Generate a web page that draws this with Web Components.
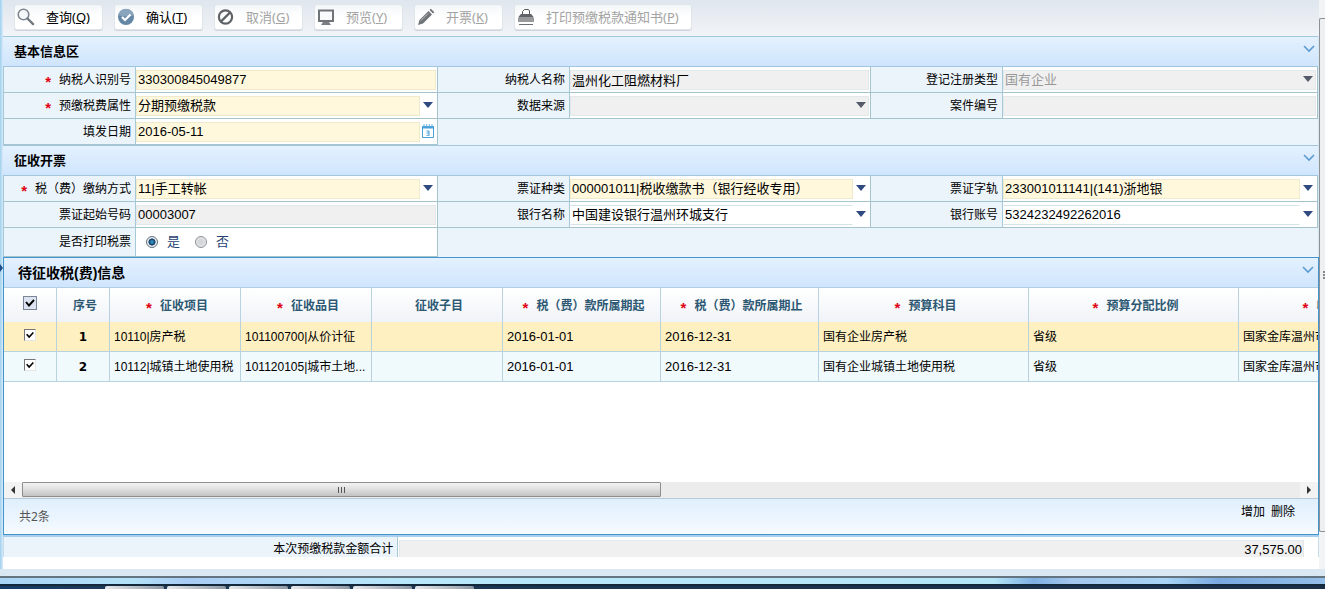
<!DOCTYPE html>
<html lang="zh-CN">
<head>
<meta charset="utf-8">
<title>预缴税款开票</title>
<style>
  body {
    margin: 0;
    background: #fff;
    color: #000;
    font: 12px/18px "Liberation Sans", "Noto Sans CJK SC", sans-serif;
    overflow: hidden;
  }
</style>
</head>
<body>
<page-frame>
  <tool-bar>
    <tool-button icon="search" key="Q">查询</tool-button>
    <tool-button icon="ok" key="T">确认</tool-button>
    <tool-button icon="cancel" key="G" disabled>取消</tool-button>
    <tool-button icon="screen" key="Y" disabled>预览</tool-button>
    <tool-button icon="pencil" key="K" disabled>开票</tool-button>
    <tool-button icon="printer" key="P" disabled>打印预缴税款通知书</tool-button>
  </tool-bar>

  <form-section heading="基本信息区">
    <form-field label="纳税人识别号" required tone="need" value="330300845049877"></form-field>
    <form-field label="纳税人名称" tone="off" value="温州化工阻燃材料厂"></form-field>
    <form-field label="登记注册类型" tone="off" type="select" muted value="国有企业"></form-field>
    <form-field label="预缴税费属性" required tone="need" type="select" value="分期预缴税款"></form-field>
    <form-field label="数据来源" tone="off" type="select" value=""></form-field>
    <form-field label="案件编号" tone="off" value=""></form-field>
    <form-field label="填发日期" tone="need" type="date" value="2016-05-11"></form-field>
  </form-section>

  <form-section heading="征收开票">
    <form-field label="税（费）缴纳方式" required tone="need" type="select" value="11|手工转帐"></form-field>
    <form-field label="票证种类" tone="need" type="select" value="000001011|税收缴款书（银行经收专用）"></form-field>
    <form-field label="票证字轨" tone="need" type="select" value="233001011141|(141)浙地银"></form-field>
    <form-field label="票证起始号码" tone="off" value="00003007"></form-field>
    <form-field label="银行名称" type="select" value="中国建设银行温州环城支行"></form-field>
    <form-field label="银行账号" type="select" value="5324232492262016"></form-field>
    <yes-no-field label="是否打印税票"></yes-no-field>
  </form-section>

  <levy-grid></levy-grid>
  <total-row label="本次预缴税款金额合计" value="37,575.00"></total-row>
</page-frame>
<task-strip></task-strip>

<script>
const define = (name, html, setup) => {
  const tpl = document.createElement('template');
  tpl.innerHTML = html;
  customElements.define(name, class extends HTMLElement {
    constructor() {
      super();
      this.attachShadow({ mode: 'open' });
    }
    connectedCallback() {
      if (this.shadowRoot.childNodes.length) return;
      this.shadowRoot.append(tpl.content.cloneNode(true));
      if (setup) setup(this, this.shadowRoot);
    }
  });
};

const ICONS = {
  search: '<circle cx="6.5" cy="6.5" r="5.3" fill="#f4f8fb" stroke="#7e8790" stroke-width="1.6"/><path d="M10.5 10.5l5.6 5.6" stroke="#707880" stroke-width="2.4" stroke-linecap="round"/>',
  ok: '<circle cx="9" cy="9" r="8" fill="#6587a6"/><path d="M1.5 7a7.6 7.6 0 0 1 15 0q-7 3-15 0z" fill="#89a5bd"/><path d="M5 9l3 3 5.5-5.5" fill="none" stroke="#fff" stroke-width="2.2"/>',
  cancel: '<circle cx="8.5" cy="9" r="6.6" fill="none" stroke="#5e6368" stroke-width="2.2"/><path d="M4 13.500L13 4.500" stroke="#5e6368" stroke-width="2.4"/>',
  screen: '<path d="M2 2.500h14v10.500H2z" fill="#f8fafc" stroke="#6f7478" stroke-width="2"/><path d="M6 14h6l2 3H4z" fill="#7c8084"/>',
  pencil: '<path d="M1 17l1.500-5L11.500 3l3.500 3.500-9 9z" fill="#6f7478"/><path d="M12.500 2l1.400-1.300 3.500 3.500L16 5.500z" fill="#6f7478"/><path d="M4 12.500l7-7" stroke="#b8bcc0"/>',
  printer: '<path d="M5.500 6V3.500L7.500 1.500h4l1 1.500V6" fill="#fff" stroke="#555"/><path d="M4 6h10l3 4v4H1v-4z" fill="#97999b"/><path d="M4 6h10l2.500 3h-15z" fill="#5f6367"/><path d="M2 16.500h14" stroke="#6d7073"/>'
};
const CHEVRON = '<svg width="12" height="8" viewBox="0 0 12 8" aria-hidden="true"><path d="M1 1l5 5 5-5" fill="none" stroke="#5b9bd0" stroke-width="1.6"/></svg>';

define('page-frame', `
  <style>
    :host { display: flex; background: #d9eaf7; }
    .left { flex: 0 0 3px; background: linear-gradient(90deg, #9fd0ef, #d8ebfa); }
    .left svg { display: block; margin-top: 264px; }
    main { flex: 1; min-width: 0; background: #fff; padding-bottom: 12px; }
    .right { flex: 0 0 6px; padding-top: 18px; background: #f2f4f6; box-sizing: border-box; }
    .thumb { height: 514px; border: 1px solid #8c9298; border-right: 0; border-radius: 2px 0 0 2px; background: #eeeff0; box-sizing: border-box; padding: 252px 0 0 3px; }
    .thumb svg { display: block; }
  </style>
  <div class="left"><svg width="3" height="8"><path d="M0 0l3 4-3 4z" fill="#1d4f8c"/></svg></div>
  <main><slot></slot></main>
  <div class="right"><div class="thumb"><svg width="2" height="10"><path d="M0 1h2M0 4h2M0 7h2" stroke="#222"/></svg></div></div>
`);

define('tool-bar', `
  <style>
    :host { display: flex; gap: 11px; padding: 4px 11px 6px; background: linear-gradient(#dfe6ee, #f1f4f7); }
  </style>
  <slot></slot>
`);

define('tool-button', `
  <style>
    :host { display: block; }
    button {
      display: flex; align-items: center; gap: 11px; min-width: 89px; height: 26px; box-sizing: border-box;
      padding: 0 12px 0 2px; border: 1px solid #e0e5ea; border-radius: 3px;
      background: linear-gradient(#f3f6f9, #fff 50%); box-shadow: 0 1px 0 #cfd5da;
      color: #000; font: 13px/18px "Noto Sans", "Noto Sans CJK SC", sans-serif; white-space: nowrap;
    }
    button:disabled { color: #a3a3a3; }
    svg { flex: none; }
  </style>
  <button type="button"><svg width="18" height="18" viewBox="0 0 18 18" aria-hidden="true"></svg><span><slot></slot>(<u></u>)</span></button>
`, (el, root) => {
  root.querySelector('svg').innerHTML = ICONS[el.getAttribute('icon')];
  root.querySelector('u').textContent = el.getAttribute('key');
  root.querySelector('button').disabled = el.hasAttribute('disabled');
});

define('form-section', `
  <style>
    :host { display: block; border-right: 1px solid #d6e6f3; }
    header {
      display: flex; justify-content: space-between; align-items: center; height: 29px; padding: 0 3px 0 11px;
      border: 1px solid #a3c6e0; border-width: 1px 0; background: linear-gradient(#e4f1fe, #cfe5fd);
    }
    h2 { margin: 0; font: bold 13px/20px "Liberation Sans", "Noto Sans CJK SC", sans-serif; }
    button { display: flex; padding: 0; border: 0; background: none; margin-bottom: 6px; }
    .fields { display: grid; grid-template-columns: 434fr 433fr 447fr; background: #ecf4fb; border-left: 1px solid #a6c9d8; }
  </style>
  <header><h2></h2><button type="button" aria-label="收起">${CHEVRON}</button></header>
  <div class="fields"><slot></slot></div>
`, (el, root) => { root.querySelector('h2').textContent = el.getAttribute('heading'); });

const FIELD_CSS = `
  :host { display: grid; grid-template-columns: 132px 1fr; border: 1px solid #a6c4cc; border-width: 0 1px 1px 0; }
  .label { display: flex; justify-content: flex-end; align-items: center; gap: 8px; padding-right: 4px; border-right: 1px solid #a6c9d8; background: #ecf4fb; white-space: nowrap; }
  .req { color: #e00010; font: bold 15px/12px "Liberation Sans", sans-serif; padding-top: 4px; }
`;

define('form-field', `
  <style>
    ${FIELD_CSS}
    .cell { display: flex; align-items: center; position: relative; min-width: 0; height: 25px; padding-right: 1px; background: #fff; }
    input, select {
      appearance: none; width: 100%; min-width: 0; height: 20px; box-sizing: border-box; margin: 0; padding: 0 0 0 1px;
      border: 1px solid #d5e3e8; border-left-color: transparent; border-radius: 0; background: #fff; color: #000; opacity: 1;
      font: 13px/18px "Liberation Sans", "Noto Sans CJK SC", sans-serif;
    }
    .open select, .open input { margin-right: 16px; border-right-color: transparent; }
    .need input, .need select { background: #fff8dc; border-color: #eeeacb; }
    .off input, .off select { background: #f0f0f0; border-color: #e3e9ea; }
    .muted select { color: #999; }
    .arrow { position: absolute; right: 3px; top: 9px; pointer-events: none; }
    .cal { position: absolute; right: 3px; top: 5px; padding: 0; border: 0; background: none; display: flex; }
  </style>
  <label class="label" for="control"><span class="text"></span></label>
  <div class="cell"></div>
`, (el, root) => {
  const type = el.getAttribute('type') || 'text';
  const tone = el.getAttribute('tone') || 'plain';
  const value = el.getAttribute('value');
  const cell = root.querySelector('.cell');
  root.querySelector('.text').textContent = el.getAttribute('label');
  if (el.hasAttribute('required')) {
    root.querySelector('.label').insertAdjacentHTML('afterbegin', '<span class="req">*</span>');
  }
  cell.classList.add(tone);
  if (el.hasAttribute('muted')) cell.classList.add('muted');
  if (type === 'select') {
    if (tone !== 'off') cell.classList.add('open');
    const select = document.createElement('select');
    select.id = 'control';
    select.add(new Option(value, value));
    select.disabled = tone === 'off';
    cell.append(select);
    cell.insertAdjacentHTML('beforeend', `<svg class="arrow" width="11" height="6" aria-hidden="true"><path d="M0 0h10l-5 6z" fill="${tone === 'off' ? '#555b68' : '#2f4a80'}"/></svg>`);
  } else {
    const input = document.createElement('input');
    input.id = 'control';
    input.type = 'text';
    input.value = value;
    input.readOnly = tone === 'off';
    cell.append(input);
    if (type === 'date') {
      cell.classList.add('open');
      cell.insertAdjacentHTML('beforeend', '<button class="cal" type="button" aria-label="选择日期"><svg width="12" height="14" viewBox="0 0 12 14"><path d="M.5 2.500h11v11H.5z" fill="#fff" stroke="#4aa0d8"/><path d="M0 2h12v2.500H0z" fill="#4aa0d8"/><path d="M2 0v3M4.700 0v3M7.300 0v3M10 0v3" stroke="#6db5e2"/><path d="M4.500 7h2.500v4M4.500 9H7M4.500 11.300H7.500" fill="none" stroke="#4aa0d8"/></svg></button>');
    }
  }
});

define('yes-no-field', `
  <style>
    ${FIELD_CSS}
    fieldset { display: flex; align-items: center; gap: 15px; height: 28px; margin: 0; padding: 0 10px; border: 0; background: #fff; min-width: 0; }
    fieldset label { display: flex; align-items: center; gap: 9px; color: #1f4272; font-size: 13px; }
    input { appearance: none; width: 12px; height: 12px; margin: 0; border: 1px solid #8b9096; border-radius: 50%; background: radial-gradient(#d4d6d8 30%, #f4f4f4); box-sizing: border-box; }
    input:checked { border-color: #5f6f7c; background: radial-gradient(circle, #2f8fc4 10%, #14385c 45%, #e9eef2 55%); }
  </style>
  <div class="label" id="caption"></div>
  <fieldset aria-labelledby="caption">
    <label><input type="radio" name="print" checked>是</label>
    <label><input type="radio" name="print">否</label>
  </fieldset>
`, (el, root) => { root.querySelector('#caption').textContent = el.getAttribute('label'); });

define('levy-grid', `
  <style>
    :host { display: block; border: 1px solid #4495cc; box-shadow: 0 2px 0 #a9cfee; margin-bottom: 2px; }
    header { display: flex; justify-content: space-between; align-items: center; height: 29px; padding: 0 4px 0 14px; background: linear-gradient(#e4f1fe, #cfe5fd); border-bottom: 1px solid #b3cfe4; }
    h2 { margin: 0; font: bold 14px/20px "Liberation Sans", "Noto Sans CJK SC", sans-serif; }
    button { display: flex; padding: 0; border: 0; background: none; margin-bottom: 6px; }
    .view { overflow: hidden; min-height: 194px; background: #fff; }
    table { table-layout: fixed; width: 1445px; border-collapse: separate; border-spacing: 0; }
    th, td { box-sizing: border-box; padding: 0 0 0 4px; border-right: 1px solid #b8d3de; white-space: nowrap; overflow: hidden; text-align: left; }
    thead th { height: 34px; padding: 2px 0 0 4px; text-align: center; color: #2c5873; background: linear-gradient(#fff, #f0f3f8); font-weight: bold; }
    thead span { display: inline-flex; align-items: center; gap: 8px; vertical-align: middle; }
    .req span::before { content: "*"; color: #e00010; font: bold 15px/12px "Liberation Sans", sans-serif; padding-top: 4px; }
    td, tbody th { height: 30px; border-bottom: 1px solid #b8d3de; background: #f0f9fc; }
    tbody tr:first-child > * { background: #fff0c2; }
    tbody th { text-align: center; padding: 0; font: bold 12px/18px "DejaVu Sans", sans-serif; }
    .pick, thead .pick { padding: 0; text-align: center; }
    .date { font-size: 13px; }
    input { appearance: none; display: block; width: 12px; height: 12px; box-sizing: border-box; margin: 0 auto 4px; border: 1px solid; border-color: #777 #e6e6e6 #e6e6e6 #777; background: #fff; }
    input:checked { background: #fff url("data:image/svg+xml,%3Csvg xmlns='http://www.w3.org/2000/svg' viewBox='0 0 12 12'%3E%3Cpath d='M2 5l3 3.500 5-5.500' fill='none' stroke='%23000' stroke-width='1.900'/%3E%3C/svg%3E"); }
    thead input { width: 14px; height: 14px; margin-bottom: 5px; border-color: #7a8696; }
    thead input:checked { background-color: #dbe4f0; }
    .scroll { display: flex; height: 16px; background: #ececec; }
    .scroll i { flex: 0 0 18px; display: flex; align-items: center; justify-content: center; background: #f3f3f3; }
    .track { flex: 1; }
    .thumb { width: 50%; height: 15px; box-sizing: border-box; border: 1px solid #8e8e8e; border-radius: 1px; background: linear-gradient(#f3f3f3, #dedede 50%, #c2c2c4); display: flex; align-items: center; justify-content: center; }
    footer { display: flex; justify-content: space-between; height: 35px; border-top: 1px solid #b9cbd8; background: linear-gradient(#e0effd, #f5faff); padding: 0 23px 0 15px; }
    .count { padding-top: 9px; color: #555; font-family: "Noto Sans", "Noto Sans CJK SC", sans-serif; }
    nav { display: flex; gap: 6px; padding-top: 4px; }
    a { color: #000; text-decoration: none; }
  </style>
  <header><h2>待征收税(费)信息</h2><button type="button" aria-label="收起">${CHEVRON}</button></header>
  <div class="view">
    <table>
      <colgroup><col width="53"><col width="53"><col width="131"><col width="131"><col width="131"><col width="158"><col width="158"><col width="210"><col width="210"><col width="210"></colgroup>
      <thead><tr>
        <th class="pick"><input type="checkbox" aria-label="全选" checked></th>
        <th><span>序号</span></th>
        <th class="req"><span>征收项目</span></th>
        <th class="req"><span>征收品目</span></th>
        <th><span>征收子目</span></th>
        <th class="req"><span>税（费）款所属期起</span></th>
        <th class="req"><span>税（费）款所属期止</span></th>
        <th class="req"><span>预算科目</span></th>
        <th class="req"><span>预算分配比例</span></th>
        <th class="req"><span>收款国库名称</span></th>
      </tr></thead>
      <tbody>
        <tr><td class="pick"><input type="checkbox" aria-label="选择第1行" checked></td><th>1</th><td>10110|房产税</td><td>101100700|从价计征</td><td></td><td class="date">2016-01-01</td><td class="date">2016-12-31</td><td>国有企业房产税</td><td>省级</td><td>国家金库温州市</td></tr>
        <tr><td class="pick"><input type="checkbox" aria-label="选择第2行" checked></td><th>2</th><td>10112|城镇土地使用税</td><td>101120105|城市土地...</td><td></td><td class="date">2016-01-01</td><td class="date">2016-12-31</td><td>国有企业城镇土地使用税</td><td>省级</td><td>国家金库温州市</td></tr>
      </tbody>
    </table>
  </div>
  <div class="scroll">
    <i><svg width="4" height="8"><path d="M4 0v8L0 4z" fill="#333"/></svg></i>
    <div class="track"><div class="thumb"><svg width="9" height="6"><path d="M1.500 0v6M4.500 0v6M7.500 0v6" stroke="#555"/></svg></div></div>
    <i><svg width="4" height="8"><path d="M0 0v8l4-4z" fill="#333"/></svg></i>
  </div>
  <footer><span class="count">共2条</span><nav><a href="#add">增加</a><a href="#remove">删除</a></nav></footer>
`);

define('total-row', `
  <style>
    :host { display: grid; grid-template-columns: 30% 1fr; height: 20px; border-left: 1px solid #c5dcea; border-right: 1px solid #c5dcea; overflow: hidden; }
    label { padding: 3px 4px 0 0; text-align: right; background: #ecf4fb; border-right: 1px solid #a6c9d8; }
    div { display: flex; padding: 3px 14px 0 1px; }
    input { width: 100%; height: 19px; box-sizing: border-box; border: 1px solid #e3e9ea; background: #f0f0f0; padding: 0 1px; text-align: right; font: 13px/17px "Liberation Sans", sans-serif; color: #000; }
  </style>
  <label for="total"></label><div><input id="total" type="text" readonly></div>
`, (el, root) => {
  root.querySelector('label').textContent = el.getAttribute('label');
  root.querySelector('input').value = el.getAttribute('value');
});

define('task-strip', `
  <style>
    :host { display: block; }
    .edge { height: 7px; background: #dae8f3; border-bottom: 2px solid #66747f; }
    .glass { height: 6px; background: linear-gradient(90deg, #a9d4f5, #b3e2f8 10%, #a9ccf4 14%, #b8e8fa 30%, #b5e6f8 75%, #7fb0e4 78%, #a5c8ee 81%, #a8d4f5 88%, #79a9e0 92%, #95bfe9); }
    .tasks { display: flex; gap: 3px; height: 3px; padding: 0 0 0 105px; border-top: 2px solid #14283c; background: linear-gradient(90deg, #173c68, #1d3a58 8%, #1b2f48); }
    .tasks i { width: 59px; background: linear-gradient(90deg, #e6e8eb, #8e99a6); border-radius: 2px 2px 0 0; }
  </style>
  <div class="edge"></div><div class="glass"></div>
  <div class="tasks"><i></i><i></i><i></i><i></i><i></i><i></i></div>
`);
</script>
</body>
</html>
